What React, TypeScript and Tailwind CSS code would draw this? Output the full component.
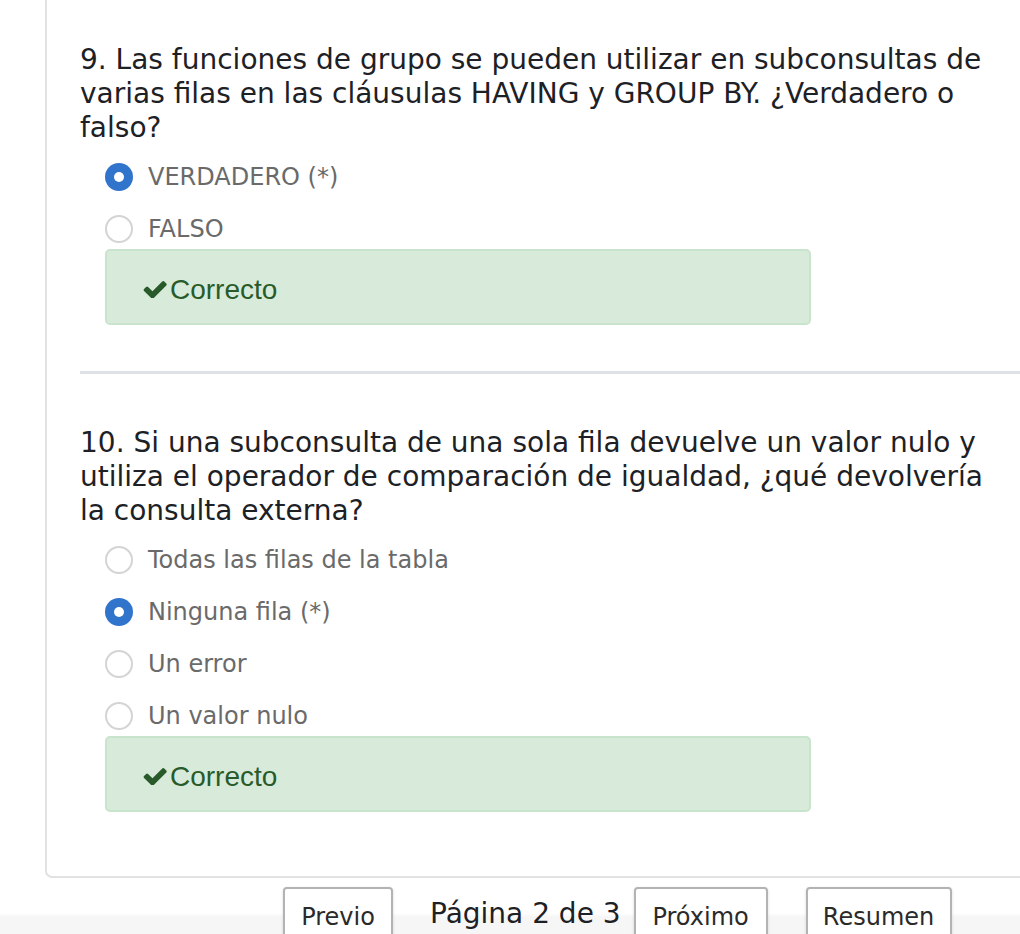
import React from "react";

const Q_FONT = { fontFamily: '"DejaVu Sans", Verdana, sans-serif' };

function Radio({ checked }: { checked: boolean }) {
  return checked ? (
    <span className="flex h-[28px] w-[28px] shrink-0 items-center justify-center rounded-full bg-[#3174cc]">
      <span className="h-[10px] w-[10px] rounded-full bg-white" />
    </span>
  ) : (
    <span className="h-[28px] w-[28px] shrink-0 rounded-full border-2 border-[#d4d4d4] bg-white" />
  );
}

function Option({ label, checked }: { label: string; checked?: boolean }) {
  return (
    <div className="flex h-[40px] items-center pl-[25px]">
      <Radio checked={!!checked} />
      <span className="ml-[15px] text-[24px] leading-[30px] text-[#6a6a6a]" style={Q_FONT}>
        {label}
      </span>
    </div>
  );
}

function Correct() {
  return (
    <div className="ml-[25px] flex h-[76px] w-[706px] items-center rounded-[5px] border-2 border-[#c9e4cc] bg-[#d8ebdb] pl-[36px] pt-[5px]">
      <svg viewBox="90 330 1590 1140" className="h-[17px] w-[24px]" fill="#285b29">
        <path d="M1671 566q0 40-28 68l-724 724-136 136q-28 28-68 28t-68-28l-136-136-362-362q-28-28-28-68t28-68l136-136q28-28 68-28t68 28l294 295 656-657q28-28 68-28t68 28l136 136q28 28 28 68z" />
      </svg>
      <span
        className="ml-[3px] text-[28px] leading-[32px] text-[#285b29]"
        style={{ fontFamily: '"Liberation Sans", Arial, sans-serif' }}
      >
        Correcto
      </span>
    </div>
  );
}

function NavButton({ label, width }: { label: string; width: string }) {
  return (
    <div
      className={`${width} flex h-[60px] shrink-0 justify-center rounded-[4px] border-2 border-[#b3b3b3] bg-white pt-[14px] text-[24px] leading-[28px] text-[#2a2a2a] shadow-[0_1px_3px_rgba(0,0,0,0.15)]`}
      style={Q_FONT}
    >
      {label}
    </div>
  );
}

export default function App() {
  return (
    <div className="relative h-[934px] w-[1020px] overflow-hidden bg-white">
      <div className="ml-[45px] w-[1100px] rounded-bl-[7px] border-b-2 border-l-2 border-[#e2e2e2] pb-[64px] pt-[43px]">
        <div className="pl-[33px]">
          <div className="w-[920px] text-[28px] leading-[34px] text-[#1d2125]" style={Q_FONT}>
            9. Las funciones de grupo se pueden utilizar en subconsultas de varias filas en las cláusulas HAVING y GROUP BY. ¿Verdadero o falso?
          </div>
          <div className="mt-[12px] flex flex-col gap-[12px]">
            <Option label="VERDADERO (*)" checked />
            <Option label="FALSO" />
          </div>
          <Correct />
          <div className="mb-[52px] mt-[46px] h-[3px] w-[1100px] bg-[#dee2e6]" />
          <div className="w-[920px] text-[28px] leading-[34px] text-[#1d2125]" style={Q_FONT}>
            10. Si una subconsulta de una sola fila devuelve un valor nulo y utiliza el operador de comparación de igualdad, ¿qué devolvería la consulta externa?
          </div>
          <div className="mt-[12px] flex flex-col gap-[12px]">
            <Option label="Todas las filas de la tabla" />
            <Option label="Ninguna fila (*)" checked />
            <Option label="Un error" />
            <Option label="Un valor nulo" />
          </div>
          <Correct />
        </div>
      </div>
      <div className="mt-[9px] flex h-[100px] items-start bg-[linear-gradient(to_bottom,#ffffff_0px,#ffffff_26px,#f6f6f6_30px)] pl-[283px]">
        <NavButton label="Previo" width="w-[110px]" />
        <span
          className="ml-[37px] mr-[13px] mt-[10px] text-[28px] leading-[34px] text-[#1d2125]"
          style={Q_FONT}
        >
          Página 2 de 3
        </span>
        <NavButton label="Próximo" width="w-[134px]" />
        <div className="w-[38px]" />
        <NavButton label="Resumen" width="w-[146px]" />
      </div>
    </div>
  );
}
